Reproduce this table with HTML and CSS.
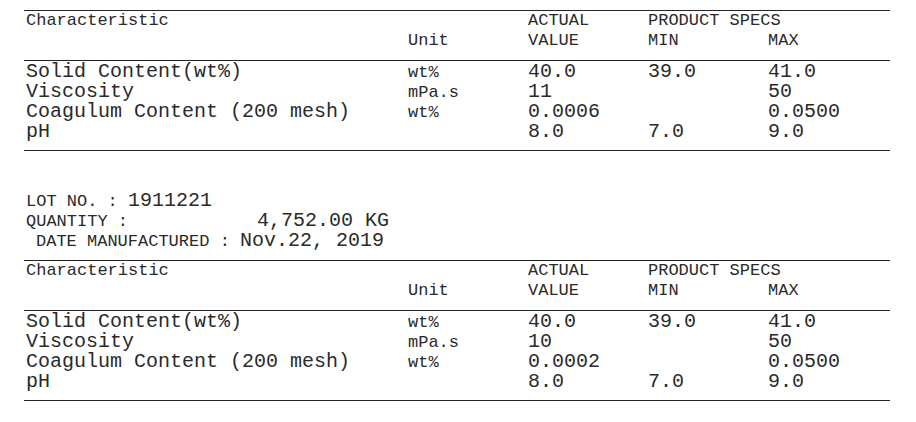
FILE: index.html
```html
<!DOCTYPE html>
<html>
<head>
<meta charset="utf-8">
<link rel="stylesheet" href="styles.css">
</head>
<body>
<div class="page">
  <section class="spec">
    <div class="spec-head">
      <div class="h-char">Characteristic</div>
      <div class="h-actual">ACTUAL</div>
      <div class="h-specs">PRODUCT SPECS</div>
      <div class="h-unit">Unit</div>
      <div class="h-value">VALUE</div>
      <div class="h-min">MIN</div>
      <div class="h-max">MAX</div>
    </div>
    <div class="spec-body">
      <div class="row"><span class="name">Solid Content(wt%)</span><span class="unit">wt%</span><span class="val">40.0</span><span class="val">39.0</span><span class="val">41.0</span></div>
      <div class="row"><span class="name">Viscosity</span><span class="unit">mPa.s</span><span class="val">11</span><span class="val"></span><span class="val">50</span></div>
      <div class="row"><span class="name">Coagulum Content (200 mesh)</span><span class="unit">wt%</span><span class="val">0.0006</span><span class="val"></span><span class="val">0.0500</span></div>
      <div class="row"><span class="name">pH</span><span class="unit"></span><span class="val">8.0</span><span class="val">7.0</span><span class="val">9.0</span></div>
    </div>
  </section>

  <div class="lot">
    <div class="lot-line"><span class="lbl">LOT NO. : </span><span class="big">1911221</span></div>
    <div class="lot-line"><span class="lbl qty-lbl">QUANTITY :</span><span class="big qty">4,752.00 KG</span></div>
    <div class="lot-line"><span class="lbl date-lbl">DATE MANUFACTURED : </span><span class="big">Nov.22, 2019</span></div>
  </div>

  <section class="spec">
    <div class="spec-head">
      <div class="h-char">Characteristic</div>
      <div class="h-actual">ACTUAL</div>
      <div class="h-specs">PRODUCT SPECS</div>
      <div class="h-unit">Unit</div>
      <div class="h-value">VALUE</div>
      <div class="h-min">MIN</div>
      <div class="h-max">MAX</div>
    </div>
    <div class="spec-body">
      <div class="row"><span class="name">Solid Content(wt%)</span><span class="unit">wt%</span><span class="val">40.0</span><span class="val">39.0</span><span class="val">41.0</span></div>
      <div class="row"><span class="name">Viscosity</span><span class="unit">mPa.s</span><span class="val">10</span><span class="val"></span><span class="val">50</span></div>
      <div class="row"><span class="name">Coagulum Content (200 mesh)</span><span class="unit">wt%</span><span class="val">0.0002</span><span class="val"></span><span class="val">0.0500</span></div>
      <div class="row"><span class="name">pH</span><span class="unit"></span><span class="val">8.0</span><span class="val">7.0</span><span class="val">9.0</span></div>
    </div>
  </section>
</div>
</body>
</html>
```
FILE: styles.css
```css
html, body {
  margin: 0;
  padding: 0;
  background: #fff;
}
body {
  font-family: "Liberation Mono", "Courier New", monospace;
  color: #2a2a2a;
}
.page {
  padding: 10px 0 0 24px;
  width: 866px;
}
.spec {
  border-top: 1px solid #262626;
  border-bottom: 1px solid #262626;
}
.spec-head {
  display: grid;
  grid-template-columns: 382px 120px 120px 120px 1fr;
  grid-template-rows: 20px 20px;
  padding: 0 0 9px 2px;
  font-size: 17px;
  line-height: 20px;
  border-bottom: 1px solid #262626;
}
.h-char { grid-column: 1; grid-row: 1; }
.h-actual { grid-column: 3; grid-row: 1; }
.h-specs { grid-column: 4 / span 2; grid-row: 1; white-space: pre; }
.h-unit { grid-column: 2; grid-row: 2; }
.h-value { grid-column: 3; grid-row: 2; }
.h-min { grid-column: 4; grid-row: 2; }
.h-max { grid-column: 5; grid-row: 2; }
.spec-body {
  padding: 1px 0 8px 2px;
}
.row {
  display: grid;
  grid-template-columns: 382px 120px 120px 120px 1fr;
  align-items: baseline;
  height: 20px;
  line-height: 20px;
  font-size: 20px;
}
.name, .val {
  white-space: pre;
}
.unit {
  font-size: 17px;
  line-height: 17px;
}
.lot {
  padding: 40px 0 9px 2px;
}
.lot-line {
  height: 20px;
  line-height: 20px;
  font-size: 20px;
  white-space: pre;
}
.lbl {
  font-size: 17px;
  line-height: 17px;
}
.qty {
  margin-left: 129px;
}
.date-lbl {
  padding-left: 10px;
}
```
